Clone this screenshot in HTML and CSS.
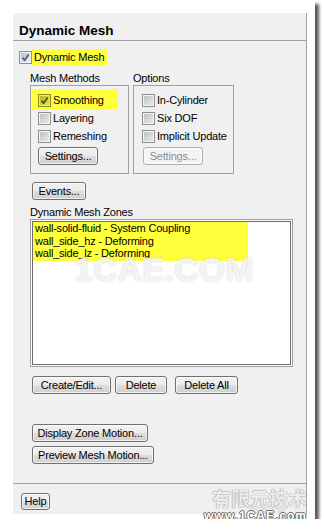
FILE: index.html
```html
<!doctype html>
<html lang="en">
<head>
  <meta charset="utf-8">
  <title>Dynamic Mesh</title>
  <meta name="viewport" content="width=device-width, initial-scale=1.0">
  <link rel="stylesheet" href="styles.css">
</head>
<body>

  <div class="window">
    <div class="panel">

      <div class="title">Dynamic Mesh</div>

      <div class="content">

        <div class="check master">
          <span class="box"><svg viewBox="0 0 9 9"><path d="M1.5 4.6 L3.6 7.2 L7.6 1.6"/></svg></span>
          <span class="mark">Dynamic Mesh</span>
        </div>

        <div class="groups">
          <div class="group">
            <div class="caption">Mesh Methods</div>
            <div class="frame methods">
              <div class="check hl">
                <span class="box"><svg viewBox="0 0 9 9"><path d="M1.5 4.6 L3.6 7.2 L7.6 1.6"/></svg></span>
                <span>Smoothing</span>
              </div>
              <div class="check"><span class="box"></span><span>Layering</span></div>
              <div class="check"><span class="box"></span><span>Remeshing</span></div>
              <button class="btn w-settings">Settings...</button>
            </div>
          </div>
          <div class="group">
            <div class="caption">Options</div>
            <div class="frame options">
              <div class="check"><span class="box"></span><span>In-Cylinder</span></div>
              <div class="check"><span class="box"></span><span>Six DOF</span></div>
              <div class="check"><span class="box"></span><span>Implicit Update</span></div>
              <button class="btn w-settings" disabled>Settings...</button>
            </div>
          </div>
        </div>

        <button class="btn w-events events">Events...</button>

        <div class="caption zones">Dynamic Mesh Zones</div>
        <div class="list">
          <div class="selected">
            <div class="item">wall-solid-fluid - System Coupling</div>
            <div class="item">wall_side_hz - Deforming</div>
            <div class="item">wall_side_lz - Deforming</div>
          </div>
        </div>

        <div class="actions">
          <button class="btn w-create">Create/Edit...</button>
          <button class="btn w-delete">Delete</button>
          <button class="btn w-delete-all">Delete All</button>
        </div>

        <button class="btn w-display display">Display Zone Motion...</button>
        <button class="btn w-preview preview">Preview Mesh Motion...</button>

      </div>

      <div class="foot">
        <button class="btn w-help">Help</button>
      </div>

    </div>

    <!-- watermarks burnt into the screenshot -->
    <div class="wm wm-list">1CAE.COM</div>
    <div class="wm wm-cn">有限元技术</div>
    <div class="wm wm-sub">仿真之家</div>
    <div class="wm wm-url">www.1CAE.com</div>
  </div>

</body>
</html>
```

FILE: styles.css
```css
/* page */

html, body {
  margin: 0;
  padding: 0;
  background: #ffffff;
}

body {
  font-family: "Liberation Sans", Arial, sans-serif;
  font-size: 11px;
  letter-spacing: -0.2px;
  color: #000000;
}

.window {
  position: relative;
  width: 315px;
  height: 519px;
  background: #ffffff;
  box-shadow: 4px 4px 3px rgba(0, 0, 0, 0.65);
  display: flex;
  flex-direction: column;
}

.panel {
  margin: 13px 8px 5px 13px;
  flex: 1;
  display: flex;
  flex-direction: column;
  background: #f0f0f0;
  border-right: 1px solid #a0a0a0;
}

/* header */

.title {
  height: 28px;
  box-sizing: border-box;
  padding: 10px 0 2px 6px;
  line-height: 16px;
  font-size: 13.5px;
  font-weight: bold;
  letter-spacing: 0;
  border-bottom: 1px solid #a0a0a0;
}

/* main area */

.content {
  flex: 1;
  display: flex;
  flex-direction: column;
  align-items: flex-start;
  padding-left: 17px;
}

.caption {
  line-height: 14px;
}

/* check boxes */

.check {
  display: flex;
  align-items: center;
  height: 18px;
  gap: 2px;
}

.box {
  width: 9px;
  height: 9px;
  border: 1px solid #8e8f8f;
  box-shadow: inset 0 0 0 1px #f4f4f4;
  padding: 1px;
  background: linear-gradient(135deg, #b9bdc2, #eeeeee);
  background-clip: content-box;
  display: flex;
  flex: none;
}

.box svg {
  width: 9px;
  height: 9px;
}

.box path {
  fill: none;
  stroke: #3d5a94;
  stroke-width: 1.7;
}

.master {
  margin: 8px 0 0 -11px;
  height: 16px;
  gap: 0;
}

.mark {
  background: #ffff3c;
  line-height: 16px;
  padding: 0 3px 0 2px;
}

.hl {
  background: #ffff3c;
  box-shadow: 0 -2px 0 #ffff3c;
  margin-left: -6px;
  padding-left: 6px;
  width: 80px;
}

.hl .box {
  border-color: #8a8a2c;
  box-shadow: inset 0 0 0 1px #f4f43a;
  background: linear-gradient(135deg, #b5b52c, #eaea3a);
  background-clip: content-box;
}

.hl .box path {
  stroke: #4b4b16;
}

/* group boxes */

.groups {
  display: flex;
  gap: 4px;
  margin-top: 6px;
}

.frame {
  box-sizing: border-box;
  height: 89px;
  border: 1px solid #a0a0a0;
  padding: 5px 0 0 7px;
  display: flex;
  flex-direction: column;
  align-items: flex-start;
}

.methods {
  width: 99px;
}

.options {
  width: 101px;
  padding-left: 8px;
}

.frame .btn {
  margin-top: 2px;
}

.options .btn {
  margin-left: 1px;
}

/* buttons */

.btn {
  box-sizing: border-box;
  height: 18px;
  padding: 0;
  font-family: inherit;
  font-size: 11px;
  letter-spacing: -0.2px;
  line-height: 16px;
  color: #000000;
  border: 1px solid #707070;
  border-radius: 3px;
  background: linear-gradient(#f2f2f2 0%, #ebebeb 48%, #dddddd 52%, #cfcfcf 100%);
  box-shadow: inset 0 0 0 1px rgba(255, 255, 255, 0.7);
}

.btn:disabled {
  color: #8d8d8d;
  border-color: #adb2b5;
  background: #f4f4f4;
}

.w-settings { width: 60px; }
.w-events { width: 54px; }
.w-create { width: 79px; }
.w-delete { width: 52px; }
.w-delete-all { width: 63px; }
.w-display { width: 116px; }
.w-preview { width: 122px; }
.w-help { width: 29px; height: 17px; line-height: 15px; }

.events {
  margin: 8px 0 0 2px;
}

.zones {
  margin-top: 5px;
}

/* zone list */

.list {
  box-sizing: border-box;
  width: 263px;
  height: 148px;
  border: 1px solid #a0a0a0;
  box-shadow: inset 0 0 0 1px #ffffff, inset 0 0 0 2px #6d6d6d;
  background: #ffffff;
  padding: 2px;
}

.selected {
  width: 215px;
  background: #ffff3c;
  padding-bottom: 1px;
}

.item {
  line-height: 12.6px;
  padding-left: 2px;
  white-space: nowrap;
}

.actions {
  display: flex;
  margin: 9px 0 0 2px;
}

.actions .w-delete {
  margin-left: 4px;
}

.actions .w-delete-all {
  margin-left: 8px;
}

.display {
  margin: 30px 0 0 2px;
}

.preview {
  margin: 4px 0 0 2px;
}

/* footer */

.foot {
  border-top: 1px solid #a0a0a0;
  padding: 9px 0 4px 8px;
}

/* watermarks */

.wm {
  position: absolute;
  white-space: nowrap;
  pointer-events: none;
  letter-spacing: 0;
  z-index: 2;
}

.wm-list {
  left: 74px;
  top: 250px;
  font-size: 34px;
  font-weight: bold;
  color: rgba(255, 255, 255, 0.8);
  text-shadow: 0 0 2px rgba(0, 0, 0, 0.22);
}

.wm-cn {
  left: 212px;
  top: 484px;
  font-family: "Noto Sans CJK SC", sans-serif;
  font-size: 19px;
  font-weight: bold;
  color: rgba(255, 255, 255, 0.85);
  text-shadow: 0 0 1px #8a8a8a, 0 0 1px #8a8a8a;
}

.wm-sub {
  left: 250px;
  top: 503px;
  font-family: "Noto Sans CJK SC", sans-serif;
  font-size: 9px;
  color: rgba(255, 255, 255, 0.85);
  text-shadow: 0 0 1px #999999;
}

.wm-url {
  left: 204px;
  top: 510px;
  font-size: 12px;
  line-height: 13px;
  font-weight: bold;
  letter-spacing: 1px;
  color: #ffffff;
  text-shadow: 1px 0 0 #666666, -1px 0 0 #666666, 0 1px 0 #666666, 0 -1px 0 #666666;
}
```
